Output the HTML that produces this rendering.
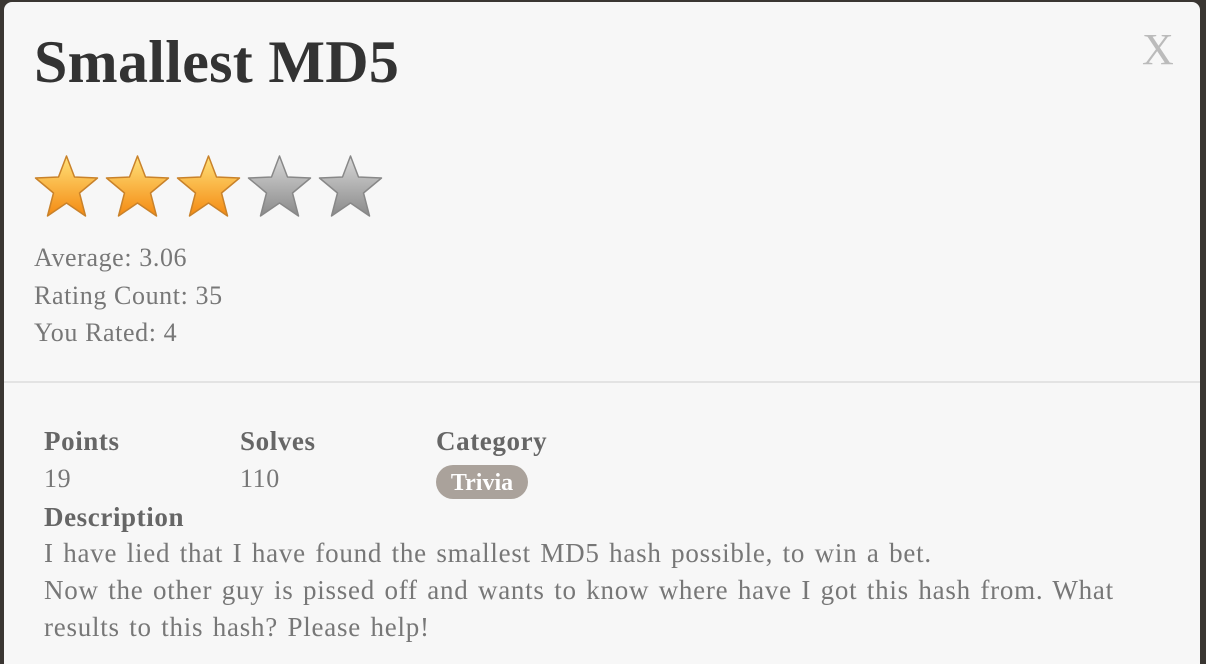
<!DOCTYPE html>
<html><head><style>
html,body{margin:0;width:1206px;height:664px;overflow:hidden}
body{background:#3a3632;font-family:"Liberation Serif",serif;position:relative}
.m{position:absolute;left:4px;top:2px;width:1196px;height:662px;background:#f7f7f7;border-radius:8px 8px 0 0}
h1{position:absolute;left:30px;top:26px;margin:0;font-size:60px;font-weight:bold;color:#333;letter-spacing:0.3px}
.x{position:absolute;left:1138px;top:22px;font-size:44px;color:#bbb}
.stars{position:absolute;left:29px;top:151px}
.stars svg{margin-right:4px}
.t{position:absolute;left:30px;font-size:26px;color:#777;letter-spacing:0.6px}
hr{position:absolute;left:0;top:379px;width:100%;margin:0;border:0;border-top:2px solid #e3e3e3}
.h{position:absolute;font-size:27px;color:#666;font-weight:bold;letter-spacing:0.6px}
.v{position:absolute;font-size:26px;color:#777;letter-spacing:0.6px}
.b{position:absolute;left:432px;top:463px;width:92px;height:34px;border-radius:17px;background:#aaa29b;color:#fff;font-weight:bold;font-size:24px;text-align:center;line-height:36px}
.d{position:absolute;left:40px;top:533px;font-size:27px;line-height:37px;color:#777;width:1150px;letter-spacing:0.75px;word-spacing:2px;white-space:nowrap}
</style></head><body><div class="m">
<h1>Smallest MD5</h1><div class="x">X</div>
<div class="stars">
<svg width="0" height="0" style="position:absolute"><defs>
<linearGradient id="g" x1="0" y1="0" x2="0" y2="1"><stop offset="0" stop-color="#ffe27a"/><stop offset="1" stop-color="#f48a12"/></linearGradient>
<linearGradient id="s" x1="0" y1="0" x2="0" y2="1"><stop offset="0" stop-color="#d8d8d8"/><stop offset="1" stop-color="#8a8a8a"/></linearGradient></defs></svg>
<svg width="67" height="66" viewBox="0 0 66 66"><path d="M33 3 L41 24 L64 25 L46 40 L52 63 L33 50 L14 63 L20 40 L2 25 L25 24Z" fill="url(#g)" stroke="#c9822a" stroke-width="1.5" stroke-linejoin="round"/></svg><svg width="67" height="66" viewBox="0 0 66 66"><path d="M33 3 L41 24 L64 25 L46 40 L52 63 L33 50 L14 63 L20 40 L2 25 L25 24Z" fill="url(#g)" stroke="#c9822a" stroke-width="1.5" stroke-linejoin="round"/></svg><svg width="67" height="66" viewBox="0 0 66 66"><path d="M33 3 L41 24 L64 25 L46 40 L52 63 L33 50 L14 63 L20 40 L2 25 L25 24Z" fill="url(#g)" stroke="#c9822a" stroke-width="1.5" stroke-linejoin="round"/></svg><svg width="67" height="66" viewBox="0 0 66 66"><path d="M33 3 L41 24 L64 25 L46 40 L52 63 L33 50 L14 63 L20 40 L2 25 L25 24Z" fill="url(#s)" stroke="#888" stroke-width="1.5" stroke-linejoin="round"/></svg><svg width="67" height="66" viewBox="0 0 66 66"><path d="M33 3 L41 24 L64 25 L46 40 L52 63 L33 50 L14 63 L20 40 L2 25 L25 24Z" fill="url(#s)" stroke="#888" stroke-width="1.5" stroke-linejoin="round"/></svg>
</div>
<div class="t" style="top:241px">Average: 3.06</div>
<div class="t" style="top:279px">Rating Count: 35</div>
<div class="t" style="top:316px">You Rated: 4</div>
<hr>
<div class="h" style="left:40px;top:424px">Points</div>
<div class="h" style="left:236px;top:424px">Solves</div>
<div class="h" style="left:432px;top:424px">Category</div>
<div class="v" style="left:40px;top:462px">19</div>
<div class="v" style="left:236px;top:462px">110</div>
<div class="b">Trivia</div>
<div class="h" style="left:40px;top:500px">Description</div>
<div class="d">I have lied that I have found the smallest MD5 hash possible, to win a bet.<br>Now the other guy is pissed off and wants to know where have I got this hash from. What<br>results to this hash? Please help!</div>
</div></body></html>
